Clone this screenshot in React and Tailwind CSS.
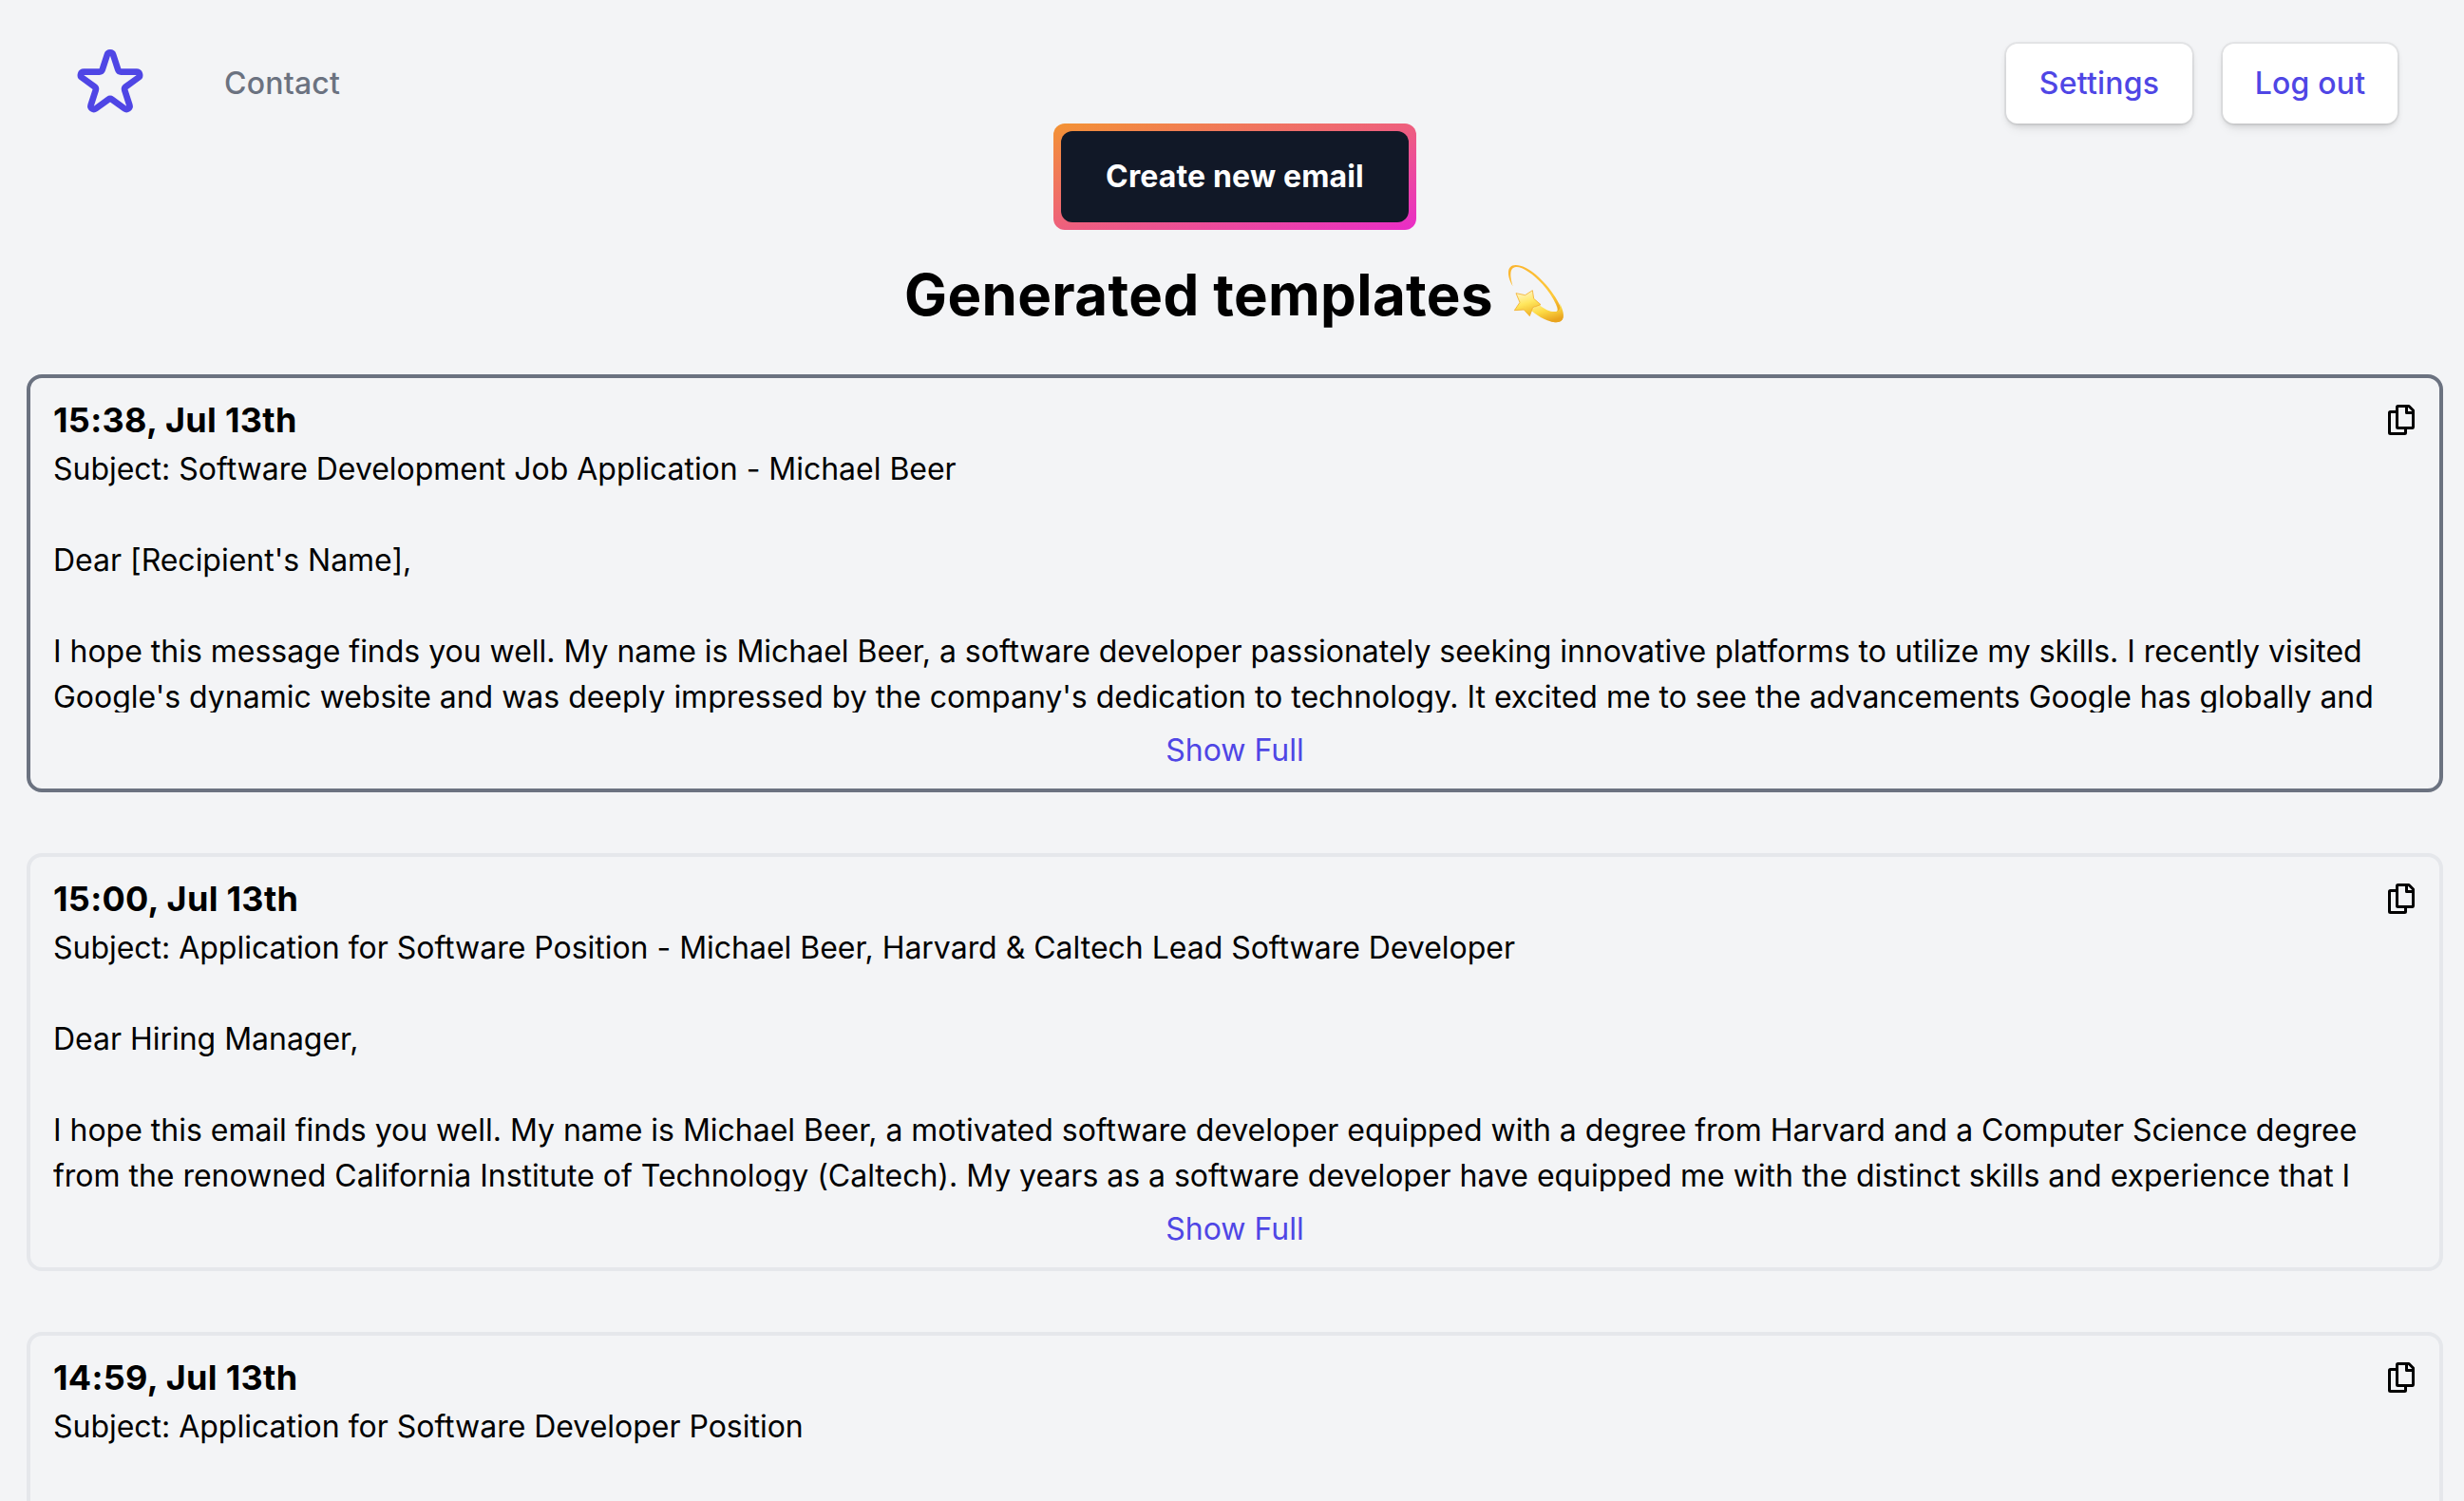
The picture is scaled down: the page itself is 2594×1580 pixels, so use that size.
const emails = [
  {
    time: '15:38, Jul 13th',
    active: true,
    body: "Subject: Software Development Job Application - Michael Beer\n\nDear [Recipient's Name],\n\nI hope this message finds you well. My name is Michael Beer, a software developer passionately seeking innovative platforms to utilize my skills. I recently visited Google's dynamic website and was deeply impressed by the company's dedication to technology. It excited me to see the advancements Google has globally and",
  },
  {
    time: '15:00, Jul 13th',
    body: 'Subject: Application for Software Position - Michael Beer, Harvard & Caltech Lead Software Developer\n\nDear Hiring Manager,\n\nI hope this email finds you well. My name is Michael Beer, a motivated software developer equipped with a degree from Harvard and a Computer Science degree from the renowned California Institute of Technology (Caltech). My years as a software developer have equipped me with the distinct skills and experience that I',
  },
  {
    time: '14:59, Jul 13th',
    body: 'Subject: Application for Software Developer Position',
  },
];

function StarIcon() {
  return (
    <svg viewBox="0 0 24 24" fill="none" stroke="currentColor" strokeWidth="2" strokeLinecap="round" strokeLinejoin="round" className="size-20 text-[#4f46e5]">
      <path d="M11.049 2.927c.3-.921 1.603-.921 1.902 0l1.519 4.674a1 1 0 00.95.69h4.915c.969 0 1.371 1.24.588 1.81l-3.976 2.888a1 1 0 00-.363 1.118l1.518 4.674c.3.922-.755 1.688-1.538 1.118l-3.976-2.888a1 1 0 00-1.176 0l-3.976 2.888c-.783.57-1.838-.197-1.538-1.118l1.518-4.674a1 1 0 00-.363-1.118l-3.976-2.888c-.784-.57-.38-1.81.588-1.81h4.914a1 1 0 00.951-.69l1.519-4.674z" />
    </svg>
  );
}

function CopyIcon() {
  return (
    <svg viewBox="0 0 36 36" fill="none" stroke="currentColor" strokeWidth="3" strokeLinejoin="round" className="size-9">
      <path d="M15.5 9.500H8.500a1 1 0 0 0-1 1v21a1 1 0 0 0 1 1h15a1 1 0 0 0 1-1v-5" />
      <path d="M16.500 3.500h11.500l4.500 4.500v17.500a1 1 0 0 1-1 1h-15a1 1 0 0 1-1-1v-21a1 1 0 0 1 1-1z" />
      <path d="M25.500 3.500v7h7" />
    </svg>
  );
}

function DizzyIcon() {
  return (
    <svg viewBox="0 0 252 228" className="-mr-[10px] ml-0.5 h-[76px] w-[84px] shrink-0 self-start">
      <defs>
        <linearGradient id="trail" x1="0" y1="0" x2="0.6" y2="1">
          <stop offset="0" stopColor="#fbb530" />
          <stop offset="0.75" stopColor="#fdc93a" />
          <stop offset="1" stopColor="#eba51f" />
        </linearGradient>
        <linearGradient id="tail" x1="0" y1="0" x2="0.5" y2="1">
          <stop offset="0" stopColor="#fff3a0" />
          <stop offset="0.5" stopColor="#fddb45" />
          <stop offset="1" stopColor="#e9a41e" />
        </linearGradient>
        <linearGradient id="star" x1="0.3" y1="0" x2="0.6" y2="1">
          <stop offset="0" stopColor="#fff6cf" />
          <stop offset="0.5" stopColor="#ffe75e" />
          <stop offset="1" stopColor="#eeb023" />
        </linearGradient>
      </defs>
      <path fill="url(#trail)" d="M56 94C39 66 33 27 65 27c38 0 92 49 125 101 19 30 28 57 23 70-7 13-27 11-40 5l14-28c12 2 13-6 5-24-9-20-25-44-42-63C121 55 86 32 66 33 44 35 47 64 56 94z" />
      <path fill="url(#tail)" d="M138 152c19 15 38 24 53 22 12-2 17-11 13-27 11 23 15 41 9 51-10 15-36 10-57 0-16-7-32-18-44-30z" />
      <path fill="url(#star)" stroke="#f3b02d" strokeWidth="2.500" strokeLinejoin="round" d="M118 107l4 26 22 19-25 9-10 27-18-20-30 2 17-25-12-29 29 6z" />
    </svg>
  );
}

const navButton =
  'h-[84px] rounded-xl bg-white text-center shadow-[0_0_0_2px_rgba(0,0,0,0.05),0_2px_6px_rgba(0,0,0,0.1),0_8px_12px_-4px_rgba(0,0,0,0.1)]';

export default function App() {
  return (
    <div className="h-[1580px] overflow-hidden bg-[#f3f4f6] font-['Inter',sans-serif] text-[32px] leading-[48px] text-black">
      <header className="flex h-[130px] items-start justify-between pr-[70px] pl-[76px]">
        <div className="flex items-center gap-20 pt-12">
          <StarIcon />
          <a className="font-medium tracking-[0.2px] text-[#6b7280]">Contact</a>
        </div>
        <div className="flex gap-8 pt-[46px] font-medium tracking-[0.2px] text-[#4f46e5]">
          <button className={navButton + ' w-[196px]'}>Settings</button>
          <button className={navButton + ' w-[184px]'}>Log out</button>
        </div>
      </header>
      <div className="flex justify-center pl-1.5">
        <button className="w-[382px] rounded-xl bg-[linear-gradient(to_bottom_right,#f39333,#e92cc8)] p-2 font-bold tracking-[0.15px] text-white">
          <span className="block rounded-xl bg-[#111827] py-6">Create new email</span>
        </button>
      </div>
      <h1 className="mt-7 flex h-20 items-center justify-center pl-1.5 text-[60px] font-bold tracking-[0.36px]">
        <span>Generated templates</span>
        <DizzyIcon />
      </h1>
      <main className="mx-7 mt-11 flex w-[2544px] flex-col gap-16">
        {emails.map((e) => (
          <article key={e.time} className={'h-[440px] shrink-0 rounded-2xl border-4 px-6 py-4 ' + (e.active ? 'border-[#6b7280]' : 'border-[#e5e7eb]')}>
            <div className="flex items-center justify-between">
              <h2 className="text-[36px] leading-[56px] font-bold tracking-[0.3px]">{e.time}</h2>
              <CopyIcon />
            </div>
            <p className="h-[280px] overflow-hidden tracking-[-0.02px] whitespace-pre-wrap">{e.body}</p>
            <div className="mt-4 text-center text-[#4f46e5]">Show Full</div>
          </article>
        ))}
      </main>
    </div>
  );
}
